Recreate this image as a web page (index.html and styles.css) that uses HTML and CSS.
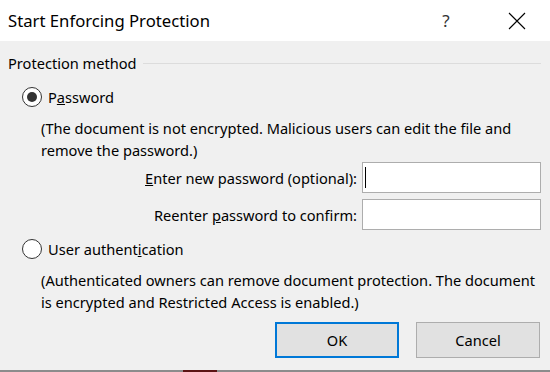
FILE: index.html
```html
<!DOCTYPE html>
<html lang="en">
<head>
    <meta charset="UTF-8">
    <title>Start Enforcing Protection</title>
    <link rel="stylesheet" href="styles.css">
</head>
<body>
    <div class="dialog">
        <div class="titlebar">
            <span class="title">Start Enforcing Protection</span>
            <span class="help">?</span>
            <span class="close">
                <svg width="18" height="18" viewBox="0 0 18 18">
                    <path d="M1 1 L17 17 M17 1 L1 17" stroke="#000" stroke-width="1.1" fill="none"/>
                </svg>
            </span>
        </div>

        <div class="content">
            <div class="group-head">
                <span>Protection method</span>
                <span class="rule"></span>
            </div>

            <div class="option">
                <span class="radio checked"></span>
                <span>P<u>a</u>ssword</span>
            </div>
            <p class="note">(The document is not encrypted. Malicious users can edit the file and<br>remove the password.)</p>

            <div class="fields">
                <label><u>E</u>nter new password (optional):</label>
                <div class="input"><span class="caret"></span></div>
                <label>Reenter <u>p</u>assword to confirm:</label>
                <div class="input"></div>
            </div>

            <div class="option option-second">
                <span class="radio"></span>
                <span>User authent<u>i</u>cation</span>
            </div>
            <p class="note">(Authenticated owners can remove document protection. The document<br>is encrypted and Restricted Access is enabled.)</p>

            <div class="buttons">
                <button class="btn btn-default">OK</button>
                <button class="btn">Cancel</button>
            </div>
        </div>

        <div class="edge"><span class="edge-mark"></span></div>
    </div>
</body>
</html>
```

FILE: styles.css
```css
html, body {
    margin: 0;
    padding: 0;
}
body {
    font-family: "Segoe UI", "Noto Sans", sans-serif;
    font-size: 14.6px;
    color: #000;
    background: #f0f0f0;
}
.dialog {
    height: 372px;
    display: flex;
    flex-direction: column;
}
.titlebar {
    height: 41px;
    background: #fff;
    display: flex;
    align-items: center;
    padding-left: 8px;
    flex-shrink: 0;
}
.title {
    font-size: 16.7px;
    flex: 1;
}
.help {
    font-size: 17px;
    width: 20px;
    text-align: center;
    margin-right: 52px;
    color: #333;
}
.close {
    width: 18px;
    height: 18px;
    margin-right: 24px;
    display: flex;
}
.content {
    flex: 1;
    padding: 12px 9px 0 8px;
}
.group-head {
    display: flex;
    align-items: center;
    height: 20px;
    line-height: 20px;
}
.group-head .rule {
    flex: 1;
    height: 1px;
    background: #dcdcdc;
    margin-left: 6px;
}
.option {
    display: flex;
    align-items: center;
    height: 20px;
    margin-top: 14px;
    padding-left: 14px;
}
.option-second {
    margin-top: 9px;
}
.radio {
    width: 20px;
    height: 20px;
    box-sizing: border-box;
    border: 1.5px solid #333;
    border-radius: 50%;
    background: #fff;
    margin-right: 6px;
    display: flex;
    align-items: center;
    justify-content: center;
}
.radio.checked::after {
    content: "";
    width: 10px;
    height: 10px;
    border-radius: 50%;
    background: #333;
}
.note {
    margin: 10px 0 0 33px;
    line-height: 22px;
}
.fields {
    display: grid;
    grid-template-columns: 1fr 179px;
    column-gap: 5px;
    row-gap: 6px;
    margin-top: 1px;
    align-items: center;
}
.fields label {
    text-align: right;
}
.input {
    height: 31px;
    box-sizing: border-box;
    border: 1px solid #adadad;
    background: #fff;
    display: flex;
    align-items: center;
    padding-left: 2px;
}
.caret {
    width: 1px;
    height: 21px;
    background: #000;
}
.buttons {
    display: flex;
    justify-content: flex-end;
    gap: 17px;
    margin-top: 9px;
    padding-right: 1px;
}
.btn {
    width: 124px;
    height: 36px;
    font-family: inherit;
    font-size: 14.6px;
    color: #000;
    background: #e1e1e1;
    border: 1px solid #adadad;
    padding: 0;
}
.btn-default {
    border: 2px solid #0078d7;
}
.edge {
    height: 2px;
    background: #8c8c8c;
    flex-shrink: 0;
    position: relative;
}
.edge-mark {
    position: absolute;
    left: 183px;
    top: 0;
    width: 34px;
    height: 2px;
    background: #5c1414;
}
```
